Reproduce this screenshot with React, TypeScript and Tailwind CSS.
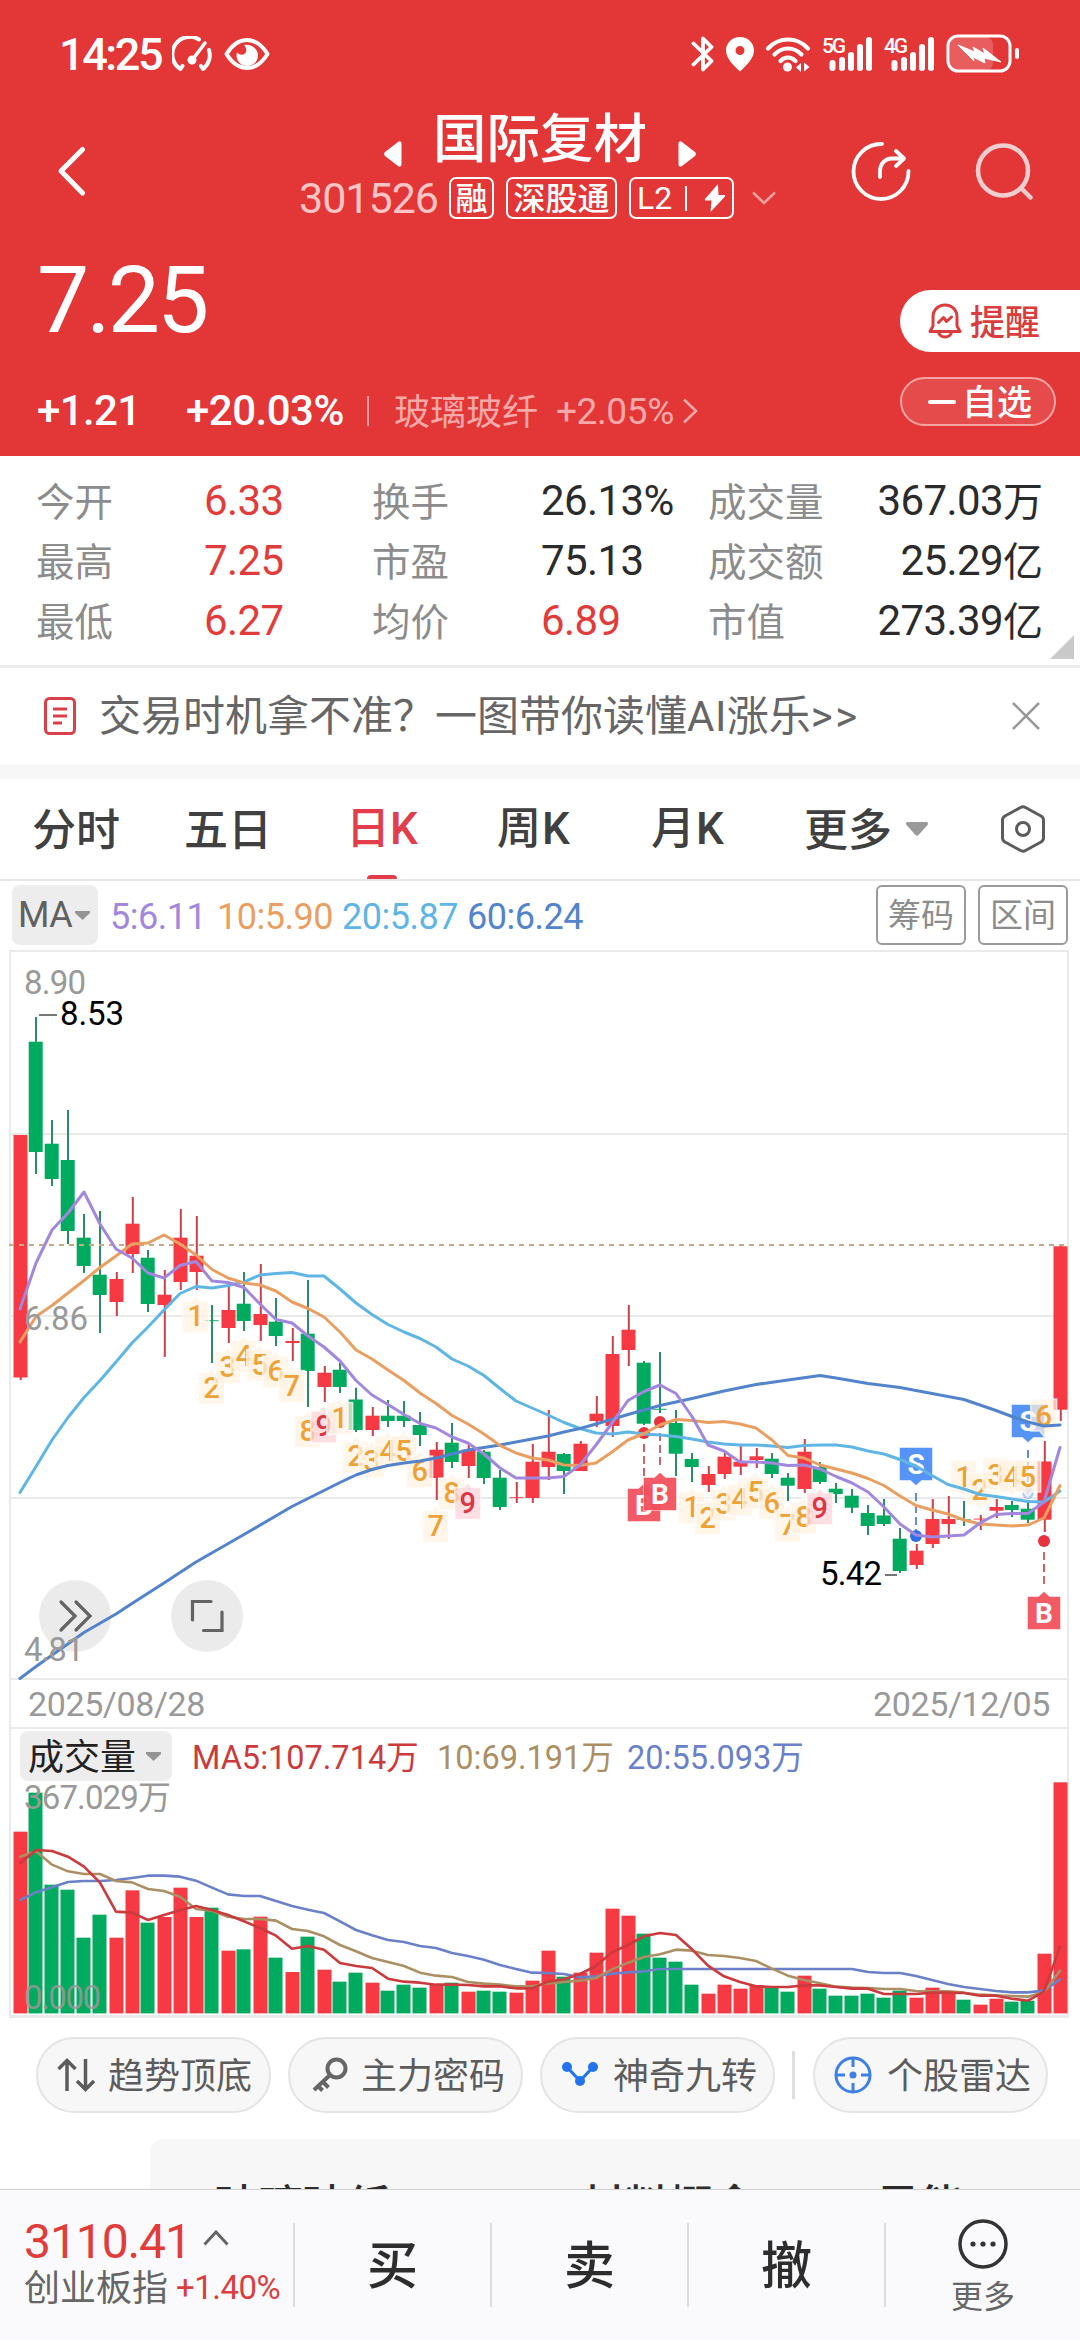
import React from "react";

type Candle = ["R" | "G", number, number, number, number];

const CANDLES: Candle[] = [
  ["R", 1135, 1135, 1377.5, 1380], ["G", 1017, 1041.7, 1152, 1174], ["G", 1120, 1143.7, 1179, 1186], ["G", 1110, 1160, 1231, 1244],
  ["G", 1214, 1237.7, 1266, 1273], ["G", 1211, 1274.7, 1295, 1333], ["R", 1272, 1279, 1302, 1316], ["R", 1197, 1223.7, 1254, 1273],
  ["G", 1250, 1257.7, 1304, 1312], ["R", 1270, 1294.7, 1305, 1357], ["R", 1209, 1237.7, 1282, 1290], ["R", 1216, 1255.7, 1272, 1290],
  ["G", 1305, 1320, 1321.2, 1363], ["R", 1286, 1310, 1328, 1343], ["G", 1272, 1303.7, 1321, 1331], ["R", 1264, 1314, 1325, 1341],
  ["G", 1298, 1321.7, 1336, 1346], ["R", 1328, 1341, 1343, 1361], ["G", 1280, 1333.7, 1371, 1407], ["R", 1366, 1372.7, 1387, 1402],
  ["G", 1363, 1369.7, 1387, 1393], ["G", 1387.7, 1399.5, 1430, 1432], ["R", 1407, 1415.7, 1430, 1436], ["G", 1400, 1415.7, 1421, 1427],
  ["G", 1401, 1415.7, 1421, 1427], ["G", 1412, 1425, 1435, 1446], ["R", 1442, 1449.7, 1478, 1500], ["G", 1423, 1442.7, 1462, 1468],
  ["R", 1443, 1449.7, 1466, 1478], ["G", 1450, 1451.7, 1478, 1484], ["G", 1470, 1477.7, 1507, 1510], ["R", 1482, 1497, 1498.2, 1503],
  ["R", 1444, 1461.7, 1498, 1503], ["R", 1410, 1451.7, 1467, 1480], ["G", 1453, 1454, 1471, 1494], ["R", 1441, 1443.7, 1471, 1471],
  ["R", 1396, 1413.7, 1421, 1427], ["R", 1336, 1354, 1426, 1437], ["R", 1305, 1329.7, 1350, 1366], ["G", 1361, 1362.7, 1423.7, 1425],
  ["G", 1352, 1408.7, 1410, 1413], ["G", 1410, 1423, 1453.7, 1476], ["G", 1453, 1459, 1467, 1482], ["R", 1466, 1474, 1485, 1492],
  ["R", 1453, 1456.7, 1474, 1479], ["R", 1446, 1461.7, 1466.7, 1475], ["R", 1448, 1456.3, 1460, 1468], ["G", 1453, 1458.7, 1474, 1478],
  ["G", 1473, 1477.7, 1485.7, 1501], ["R", 1439, 1451.7, 1489, 1493], ["G", 1462, 1467, 1482, 1484], ["G", 1483, 1488.7, 1494, 1503],
  ["G", 1489, 1495.7, 1507.7, 1513], ["G", 1505, 1513, 1526, 1535], ["G", 1499, 1515.5, 1524, 1526], ["G", 1528, 1538.7, 1571, 1573],
  ["R", 1544, 1550.7, 1565, 1569], ["R", 1499, 1519, 1544, 1548], ["R", 1496, 1519, 1524, 1539], ["G", 1501, 1519, 1520, 1526],
  ["R", 1515, 1518.5, 1519.7, 1530], ["R", 1499, 1507, 1510.7, 1518], ["G", 1501, 1505, 1510, 1517], ["G", 1500, 1508.7, 1519.7, 1523],
  ["R", 1441, 1461.5, 1519.7, 1532], ["R", 1246, 1246.3, 1409.7, 1421],
];

const MA5 = [1309, 1263, 1230, 1213, 1192, 1224, 1249, 1258, 1273, 1278, 1265.5, 1261.5, 1281, 1282.5, 1287.5, 1304, 1319.5, 1323, 1336, 1347, 1361, 1380.5, 1395, 1404.5, 1414.5, 1423.5, 1428, 1437, 1443, 1454, 1468, 1478, 1478, 1478, 1476.5, 1465, 1445, 1423, 1400.5, 1391.5, 1385, 1393.5, 1416.5, 1445, 1451, 1462, 1462, 1463, 1465.5, 1465, 1469, 1476.5, 1483, 1492, 1507, 1524, 1535, 1537, 1536, 1535, 1523, 1514.5, 1513.5, 1513.5, 1502, 1447.5];
const MA10 = [1342, 1316.5, 1305.5, 1293, 1280.5, 1267.5, 1256, 1244, 1243, 1235, 1244, 1255, 1269.5, 1278, 1283, 1285, 1291, 1302, 1308.5, 1317, 1332, 1350, 1359, 1370, 1380.5, 1393, 1403.5, 1415.5, 1424, 1434, 1445.5, 1453, 1458, 1460, 1465, 1465.5, 1463, 1452, 1440, 1433.5, 1425, 1419.5, 1420.5, 1422.5, 1421.5, 1424, 1428, 1440, 1455.5, 1458, 1465, 1469, 1473, 1478.5, 1485.5, 1496, 1505.5, 1510, 1514, 1520, 1524, 1525, 1526, 1525, 1518, 1485.5];
const MA20 = [1492.5, 1466.5, 1440, 1417.5, 1397.5, 1380.5, 1362, 1343, 1327, 1310, 1293.5, 1286.5, 1288, 1285.5, 1282, 1275, 1273.5, 1272.5, 1276, 1276, 1289, 1303, 1314.5, 1324.5, 1332, 1338.5, 1347, 1359, 1366, 1375.5, 1388.5, 1401, 1408, 1415, 1422.5, 1428.5, 1433, 1434, 1432, 1434, 1435, 1436.5, 1439, 1442, 1444, 1445, 1445, 1446, 1447.5, 1445.5, 1445, 1445, 1447, 1451, 1454, 1459.5, 1466, 1475.5, 1484.5, 1489, 1494.5, 1496.5, 1499, 1501.5, 1502, 1491];
const MA60: [number, number][] = [[0, 1678.5], [1, 1666.5], [4, 1632.5], [6, 1614], [7, 1603.5], [9, 1583], [11, 1562], [14, 1534.5], [17, 1506.5], [20, 1482.5], [21, 1475], [22, 1469.5], [23, 1465.5], [24, 1463], [25, 1461], [26, 1458], [27, 1454], [28, 1450], [29, 1447.5], [30, 1445], [31, 1442], [32, 1439], [33, 1436], [34, 1432], [35, 1428.5], [36, 1424], [38, 1414.5], [40, 1405.5], [42, 1398.5], [44, 1391], [46, 1384.5], [48, 1380], [50, 1375.5], [51, 1378], [53, 1383.5], [55, 1387.5], [57, 1393.5], [59, 1399.5], [61, 1410.5], [62, 1416.5], [63, 1422], [64, 1426], [65, 1425]];

/* Volume values are measured downwards in thirds of a pixel from the top of the pane. */
const VOL = [395, 278, 554, 569, 713, 644, 713, 571, 668, 651, 563, 651, 623, 752, 748, 650, 773, 816, 710, 809, 845, 818, 848, 872, 854, 863, 854, 848, 875, 872, 875, 878, 842, 752, 830, 818, 758, 626, 647, 701, 773, 785, 854, 881, 854, 866, 855, 863, 875, 827, 866, 887, 887, 881, 893, 872, 893, 863, 881, 899, 914, 896, 905, 902, 761, 247];
const VMA5 = [490, 450, 453, 470, 500, 548, 635, 638, 660, 645, 631, 618, 630, 645, 664, 684, 707, 746, 738, 749, 789, 798, 804, 836, 845, 848, 854, 854, 855, 859, 859, 865, 865, 845, 838, 822, 798, 757, 735, 709, 699, 705, 748, 797, 829, 846, 859, 861, 861, 856, 856, 861, 866, 866, 882, 882, 882, 878, 878, 879, 887, 887, 896, 902, 875, 740];
const VMA10 = [470, 454, 494, 514, 522, 522, 543, 547, 567, 573, 590, 627, 632, 650, 657, 657, 662, 687, 693, 709, 735, 754, 774, 786, 798, 818, 827, 831, 846, 851, 854, 859, 859, 850, 846, 842, 834, 808, 788, 771, 763, 749, 752, 765, 768, 774, 783, 806, 827, 840, 850, 860, 863, 864, 867, 867, 873, 874, 874, 878, 884, 886, 888, 890, 876, 812];
const VMA20 = [600, 577, 562, 546, 543, 543, 540, 534, 527, 527, 530, 542, 563, 583, 588, 588, 603, 618, 629, 639, 664, 690, 706, 720, 726, 738, 744, 759, 768, 779, 795, 807, 818, 819, 822, 832, 829, 821, 817, 814, 807, 807, 807, 807, 807, 807, 807, 807, 807, 807, 807, 807, 807, 816, 819, 819, 828, 840, 852, 861, 867, 873, 877, 877, 872, 838];

type Chip = [number, string, number, boolean?];
const CHIPS: Chip[] = [
  [11, "1", 1316], [12, "2", 1387.5], [13, "3", 1367], [14, "4", 1355.5], [15, "5", 1364.5], [16, "6", 1371], [17, "7", 1385.5],
  [18, "8", 1431], [19, "9", 1426], [20, "1", 1417.5], [21, "2", 1456], [22, "3", 1461], [23, "4", 1451], [24, "5", 1451], [25, "6", 1471],
  [26, "7", 1525.5], [27, "8", 1493], [28, "9", 1502.5],
  [42, "1", 1507], [43, "2", 1518], [44, "3", 1504], [45, "4", 1499], [46, "5", 1492], [47, "6", 1502.5], [48, "7", 1525], [49, "8", 1517], [50, "9", 1508],
  [59, "1", 1477, true], [60, "2", 1490, true], [61, "3", 1474.5, true], [62, "4", 1477, true], [63, "5", 1477, true], [64, "6", 1416, true],
];

const cx = (i: number) => 20.5 + 16 * i;
const line = (v: number[]) => v.map((y, i) => `${cx(i) - 0.5},${y}`).join(" ");
const vline = (v: number[]) => v.map((y, i) => `${cx(i) - 0.5},${1700 + y / 3}`).join(" ");

const NUM = "[font-family:Roboto,'Noto_Sans_CJK_SC',sans-serif]";
const CJK = "pb-[0.11em] [font-family:'Noto_Sans_CJK_SC',sans-serif]";

function NumberChip({ chip }: { chip: Chip }) {
  const [i, t, y, above] = chip;
  const x = cx(i) - 0.8;
  const nine = t === "9";
  const d = above
    ? `M${x - 13} ${y - 17}h26v32h-9l-4 5l-4-5h-9z`
    : `M${x - 13} ${y - 15}h9l4-5l4 5h9v32h-26z`;
  return (
    <g>
      <path d={d} fill={nine ? "#ffd3d8" : "#fff1e0"} fillOpacity={0.72} stroke="#fff" strokeOpacity={0.7} strokeWidth={1.5} />
      <text x={x} y={y + 10} textAnchor="middle" fontSize={29} fontWeight={500} fill={nine ? "#dc3644" : "#eea235"} className={NUM}>{t}</text>
    </g>
  );
}

function TradeMark({ i, kind, top, dot, from, to, dim }: { i: number; kind: "B" | "S"; top: number; dot: number; from: number; to: number; dim?: boolean }) {
  const x = cx(i) - 0.5;
  const buy = kind === "B";
  const box = buy ? `M${x - 16.5} ${top}h11l5.500-5l5.500 5h11v33h-33z` : `M${x - 16.500} ${top}h33v33h-11l-5.500 5l-5.500-5h-11z`;
  return (
    <g>
      <circle cx={x} cy={dot} r={6} fill={buy ? "#e6333e" : "#2c6fe8"} fillOpacity={dim ? 0.35 : 1} />
      <line x1={x} x2={x} y1={from} y2={to} stroke={buy ? "#c9555d" : "#5483c8"} strokeWidth={1.8} strokeDasharray="8 4" />
      <path d={box} fill={buy ? "#f1505b" : "#4a8cf6"} fillOpacity={0.94} stroke="#fff" strokeOpacity={0.5} strokeWidth={1} />
      <text x={x} y={top + 26} textAnchor="middle" fontSize={28} fontWeight={700} fill="#fff" className={NUM}>{kind}</text>
    </g>
  );
}

function PriceChart() {
  return (
    <svg className="block overflow-visible" width={1056} height={728} viewBox="11 952 1056 728">
      <g stroke="#eaeaea" strokeWidth={2}>
        {[1134, 1316, 1498, 1679].map((y) => <line key={y} x1={11} x2={1067} y1={y} y2={y} />)}
      </g>
      <circle cx={75} cy={1616} r={36} fill="#ebebeb" />
      <circle cx={207} cy={1616} r={36} fill="#ebebeb" />
      {CANDLES.map(([c, h, t, b, l], i) => {
        const x = c === "R" ? cx(i) : cx(i) - 0.8;
        const doji = b - t < 1.6;
        const fill = c === "R" ? "#f63942" : "#00aa5e";
        const wick = c === "R" ? "#c9414b" : "#2b8d62";
        return (
          <g key={i}>
            <rect x={x - 0.7} y={h} width={2} height={l - h} fill={wick} />
            <rect x={x - 7} y={t} width={14} height={b - t} fill={fill} fillOpacity={doji ? 0.75 : 1} />
          </g>
        );
      })}
      <TradeMark i={39} kind="B" top={1488.5} dot={1433} from={1444} to={1478} />
      <TradeMark i={40} kind="B" top={1477.5} dot={1422} from={1433} to={1469} />
      <TradeMark i={64} kind="B" top={1596.5} dot={1541} from={1552} to={1588} />
      <TradeMark i={56} kind="S" top={1447.5} dot={1536} from={1493} to={1530} />
      <TradeMark i={63} kind="S" top={1404.5} dot={1493} from={1450} to={1485} dim />
      {CHIPS.map((c) => <NumberChip key={`${c[0]}-${c[1]}`} chip={c} />)}
      <line x1={9} x2={1069} y1={1245} y2={1245} stroke="#c5ab84" strokeWidth={2} strokeDasharray="5 5" />
      <g fill="none" strokeWidth={3} strokeLinejoin="round" strokeLinecap="round">
        <polyline points={line(MA20)} stroke="#5fb6e4" />
        <polyline points={MA60.map(([i, y]) => `${cx(i) - 0.5},${y}`).join(" ")} stroke="#5384cb" />
        <polyline points={line(MA10)} stroke="#ea9f62" />
        <polyline points={line(MA5)} stroke="#a288dc" />
      </g>
      <g stroke="#636363" strokeWidth={3.200} fill="none" strokeLinecap="round">
        <path d="M61 1602l14 14l-14 14M76 1602l14 14l-14 14" />
        <path d="M192.500 1620v-18.500h18.500M203.500 1630.500h18.500v-18.500" />
      </g>
      <g className={NUM} fontSize={33} fill="#999">
        <text x={24} y={994} textLength={62}>8.90</text>
        <text x={24} y={1330} textLength={64}>6.86</text>
        <text x={24} y={1661} textLength={60}>4.81</text>
        <g fill="#000">
          <text x={60} y={1025} textLength={64}>8.53</text>
          <text x={820} y={1585} textLength={62}>5.42</text>
        </g>
      </g>
      <path d="M39 1015h18M885 1575h12" stroke="#777" strokeWidth={2} />
    </svg>
  );
}

function VolumeChart() {
  return (
    <svg className="block overflow-visible" width={1056} height={232} viewBox="11 1783 1056 232">
      {VOL.map((v, i) => {
        const red = CANDLES[i][0] === "R";
        const top = 1700 + v / 3;
        return <rect key={i} x={(red ? cx(i) : cx(i) - 1) - 7} y={top} width={14} height={2013.4 - top} fill={red ? "#f63942" : "#00aa5e"} />;
      })}
      <g fill="none" strokeWidth={2.600} strokeLinejoin="round" strokeLinecap="round">
        <polyline points={vline(VMA20)} stroke="#6a80c8" />
        <polyline points={vline(VMA10)} stroke="#ab8f62" />
        <polyline points={vline(VMA5)} stroke="#cb3a3c" />
      </g>
      <g className={NUM} fontSize={33} fill="#999">
        <text x={24} y={1809} textLength={147}>367.029万</text>
        <text x={24} y={2009} textLength={77} fillOpacity={0.85}>0.000</text>
      </g>
    </svg>
  );
}

function Signal({ label }: { label: string }) {
  return (
    <svg className="overflow-visible" width={52} height={36} viewBox="0 0 52 36">
      <text x={0} y={17} fontSize={21} fontWeight={500} fill="#fff" textLength={24} className={NUM}>{label}</text>
      <g fill="#fff">
        <rect x={7.500} y={24} width={6} height={11} rx={3} />
        <rect x={17} y={21} width={6} height={14} rx={3} />
        <rect x={26} y={16} width={6} height={19} rx={3} />
        <rect x={35} y={8} width={6} height={27} rx={3} />
        <rect x={44} y={1} width={6} height={34} rx={3} />
      </g>
    </svg>
  );
}

function StatusBar() {
  return (
    <div className="flex h-[108px] items-center pl-[59px] pr-[60px]">
      <span className={`${NUM} w-[111px] whitespace-nowrap text-[45px] font-medium leading-none tracking-[-2.4px]`}>14:25</span>
      <svg className="ml-[2px]" width={40} height={36} viewBox="0 0 40 36" fill="none" stroke="#fff" strokeWidth={4} strokeLinecap="round">
        <path d="M8.500 33A17 17 0 1 1 27 3.500M37 14A17.500 17.500 0 0 1 31 33M8.500 33l2-3M31 33l-2-3" />
        <path d="M33 7L21 23" strokeWidth={3.500} />
        <circle cx={20} cy={24} r={2.500} fill="#fff" />
      </svg>
      <svg className="ml-[12px]" width={46} height={34} viewBox="0 0 46 34">
        <path d="M2.500 17C8 8 15 3 23 3s15 5 20.500 14C38 26 31 31 23 31S8 26 2.500 17z" fill="none" stroke="#fff" strokeWidth={4} strokeLinejoin="round" />
        <path d="M20 8c8-1 14 4 14 10.500S29 29 23 29s-10.500-5-10.500-10.500c0-1 .2-2 .6-3c1.500 2 5 3 7.400 1.500c2.500-2 2.500-6-.5-9z" fill="#fff" />
      </svg>
      <div className="ml-auto flex items-center">
        <svg width={24} height={36} viewBox="0 0 24 36" fill="none" stroke="#fff" strokeWidth={3.800} strokeLinejoin="round" strokeLinecap="round">
          <path d="M2.500 7.500L20.500 25L12 33.500V2.500L20.500 11L2.500 28.500" />
        </svg>
        <svg className="ml-[11px]" width={28} height={36} viewBox="0 0 28 36">
          <path fillRule="evenodd" fill="#fff" d="M14 1C6 1 0 7 0 14.500C0 22 7 29 14 35.500C21 29 28 22 28 14.500C28 7 22 1 14 1zM14 10a4.500 4.500 0 1 1 0 9a4.500 4.500 0 0 1 0-9z" />
        </svg>
        <svg className="ml-[11px]" width={46} height={36} viewBox="0 0 46 36" fill="none" stroke="#fff" strokeWidth={4.200} strokeLinecap="round">
          <path d="M3 12.500C14 0.500 32 0.500 43 12.500M9.500 18.500C17 10.500 29 10.500 36.500 18.500M15.500 25C20 20.500 26 20.500 30.500 25" />
          <circle cx={22.500} cy={31} r={4.500} fill="#fff" stroke="none" />
          <path d="M36 27v9l-5-4.500zM39 26.500v9l5.500-4.500z" fill="#fff" stroke="none" />
        </svg>
        <div className="ml-[11px] flex gap-[10px]"><Signal label="5G" /><Signal label="4G" /></div>
        <svg className="ml-[10px]" width={74} height={40} viewBox="0 0 74 40">
          <rect x={4} y={3} width={43} height={34} rx={8} fill="#fff" fillOpacity={0.2} />
          <rect x={2} y={2} width={62} height={35} rx={10} fill="none" stroke="#fff" strokeWidth={3} />
          <rect x={69} y={14} width={4} height={11} rx={2} fill="#fff" />
          <path d="M12 11l17 7l-2-5l12 7l-2-6l18 14l-17-4l1 5l-12-6l1 4z" fill="#fff" stroke="#fff" strokeLinejoin="round" />
        </svg>
      </div>
    </div>
  );
}

function Header() {
  const tag = `${CJK} flex h-[42px] items-center justify-center whitespace-nowrap rounded-[7px] border-2 border-white text-[32px] font-medium leading-none`;
  return (
    <header className="h-[456px] bg-[#e33637] text-white">
      <StatusBar />
      <div className="flex h-[120px]">
        <svg className="ml-[54px] mt-[36px]" width={34} height={54} viewBox="0 0 34 54" fill="none" stroke="#fff" strokeWidth={5} strokeLinecap="round" strokeLinejoin="round">
          <path d="M28.500 5.500L7 27l21.500 22" />
        </svg>
        <div className="ml-[212px] w-[478px]">
          <div className="ml-[84px] flex h-[64px] items-center">
            <svg className="mt-[28px]" width={18} height={26} viewBox="0 0 18 26"><path d="M17.500 2.500v21c0 2-2 3-3.500 1.500L1 15c-1.200-1-1.200-3 0-4L14 1c1.500-1.500 3.500-.5 3.500 1.500z" fill="#fff" /></svg>
            <h1 className={`${CJK} mb-[5px] ml-[31px] w-[216px] whitespace-nowrap text-[53.5px] font-medium leading-[54px]`}>国际复材</h1>
            <svg className="ml-[29px] mt-[28px]" width={18} height={26} viewBox="0 0 18 26"><path d="M.5 2.500v21c0 2 2 3 3.500 1.500L17 15c1.200-1 1.200-3 0-4L4 1C2.500-.5.5.5.500 2.500z" fill="#fff" /></svg>
          </div>
          <div className="mt-[5px] flex h-[42px] items-center">
            <span className={`${NUM} ml-[-1px] w-[150px] whitespace-nowrap text-[43px] leading-none tracking-[-1px] text-[#ffc4c4]`}>301526</span>
            <span className={`${tag} w-[45px]`}>融</span>
            <span className={`${tag} ml-[12px] w-[111px]`}>深股通</span>
            <span className={`${NUM} ml-[12px] flex h-[42px] w-[105px] items-center rounded-[7px] border-2 border-white pl-[6px] text-[32px] leading-none`}>
              <span className="w-[38px]">L2</span>
              <i className="ml-[10px] h-[25px] w-[2px] bg-white" />
              <svg className="ml-[17px]" width={22} height={30} viewBox="0 0 22 30"><path d="M14 1L1 16c-.5.800 0 1.500 1 1.500h5.500L6.500 29L21 13.500c.5-.8 0-1.500-1-1.500h-5.500z" fill="#fff" /></svg>
            </span>
            <svg className="ml-[18px]" width={24} height={14} viewBox="0 0 24 14" fill="none" stroke="#f3a0a0" strokeWidth={2.500}><path d="M1 1.500l11 10.500l11-10.500" /></svg>
          </div>
        </div>
        <svg className="ml-[73px] mt-[32px]" width={60} height={62} viewBox="0 0 60 62" fill="none" stroke="#fff" strokeWidth={3.800} strokeLinecap="round" strokeLinejoin="round">
          <path d="M31 4A27.500 27.500 0 1 0 57.500 31" />
          <path d="M29 37v-6c0-7 5-12.500 12-12.500h11M45 11l8 7.500l-8 7.500" />
        </svg>
        <svg className="ml-[64px] mt-[34px]" width={58} height={60} viewBox="0 0 58 60" fill="none" stroke="#f0cdcf" strokeWidth={4.500} strokeLinecap="round">
          <circle cx={28} cy={28.500} r={25} /><path d="M46.500 46.500l9 9" />
        </svg>
      </div>
      <div className="flex h-[228px]">
        <div className="flex-1 pl-[37px]">
          <div className={`${NUM} mt-[20px] h-[106px] text-[93px] font-normal leading-[106px] tracking-[-3px]`}>7.25</div>
          <div className="mt-[35px] flex h-[44px] items-center">
            <span className={`${NUM} w-[149px] text-[42px] font-medium leading-none tracking-[-0.6px]`}>+1.21</span>
            <span className={`${NUM} w-[181px] text-[42px] font-medium leading-none tracking-[-0.5px]`}>+20.03%</span>
            <i className="h-[30px] w-[2px] bg-[#f09a9a]" />
            <span className={`${CJK} ml-[25px] w-[162px] whitespace-nowrap text-[36px] leading-none text-[#f9a9a9]`}>玻璃玻纤</span>
            <span className={`${NUM} w-[126px] whitespace-nowrap text-[37px] leading-none text-[#f9a9a9] tracking-[-0.4px]`}>+2.05%</span>
            <svg width={16} height={26} viewBox="0 0 16 26" fill="none" stroke="#f9a9a9" strokeWidth={2.500}><path d="M2 1.500L14 13L2 24.500" /></svg>
          </div>
        </div>
        <div className="w-[180px]">
          <div className="mt-[62px] flex h-[62px] items-center rounded-l-[31px] bg-white text-[#da3d3e]">
            <svg className="ml-[28px]" width={34} height={36} viewBox="0 0 34 36" fill="none" stroke="currentColor" strokeWidth={3} strokeLinejoin="round" strokeLinecap="round">
              <path d="M2 28.500L5 23V14C5 7 10 2 17 2s12 5 12 12v9l3 5.500zM10.500 29c1 6.500 12 6.500 13 0M10.500 19.500l5-5l3 4l5-4.500" />
            </svg>
            <span className={`${CJK} ml-[8px] text-[35px] font-medium leading-none`}>提醒</span>
          </div>
          <div className="mt-[25px] flex h-[49px] w-[156px] items-center rounded-full border-2 border-[#f5a3a3] bg-[#e64b4c]">
            <i className="ml-[26px] h-[4px] w-[28px] rounded bg-white" />
            <span className={`${CJK} ml-[6px] text-[35px] font-medium leading-none`}>自选</span>
          </div>
        </div>
      </div>
    </header>
  );
}

const STATS: [string, string, boolean, string, string, boolean, string, string, string][] = [
  ["今开", "6.33", true, "换手", "26.13%", false, "成交量", "367.03", "万"],
  ["最高", "7.25", true, "市盈", "75.13", false, "成交额", "25.29", "亿"],
  ["最低", "6.27", true, "均价", "6.89", true, "市值", "273.39", "亿"],
];

function Stats() {
  const label = `${CJK} text-[38.5px] leading-none text-[#8c8c8c]`;
  const value = `${NUM} text-[42px] leading-none tracking-[-0.6px]`;
  return (
    <section className="relative h-[212px] border-b-[3px] border-[#ebebeb] pt-[15px]">
      {STATS.map((r) => (
        <div key={r[0]} className="flex h-[60px] items-center pl-[36px] pr-[37px]">
          <span className={`${label} w-[168px]`}>{r[0]}</span>
          <span className={`${value} w-[168px] text-[#e23c3a]`}>{r[1]}</span>
          <span className={`${label} w-[169px]`}>{r[3]}</span>
          <span className={`${value} w-[167px] ${r[5] ? "text-[#e23c3a]" : "text-[#2b2b2b]"}`}>{r[4]}</span>
          <span className={`${label}`}>{r[6]}</span>
          <span className="ml-auto flex items-center text-[#2b2b2b]">
            <span className={`${value}`}>{r[7]}</span>
            <span className={`${CJK} text-[40px] leading-none`}>{r[8]}</span>
          </span>
        </div>
      ))}
      <svg className="absolute bottom-[6px] right-[6px]" width={24} height={24} viewBox="0 0 24 24"><path d="M24 0v24H0z" fill="#c9c9c9" /></svg>
    </section>
  );
}

function Notice() {
  return (
    <section className="box-border flex h-[111px] items-center border-b-[15px] border-[#f7f7f7]">
      <svg className="ml-[44px]" width={32} height={38} viewBox="0 0 32 38" fill="none" stroke="#d8404a" strokeWidth={3}>
        <rect x={1.500} y={1.500} width={29} height={35} rx={4} /><path d="M9 12h14M9 19h14M9 26h9" />
      </svg>
      <p className="ml-[23px] whitespace-nowrap pb-[2px] text-[42px] leading-none text-[#666] [font-family:'Noto_Sans_CJK_SC',sans-serif]">交易时机拿不准？一图带你读懂<span className="tracking-[0.5px] [font-family:Roboto]">AI</span>涨乐<span className="tracking-[2.5px] [font-family:Roboto]">&gt;&gt;</span></p>
      <svg className="ml-auto mr-[40px]" width={28} height={28} viewBox="0 0 28 28" stroke="#999" strokeWidth={2.500}><path d="M1 1l26 26M27 1L1 27" /></svg>
    </section>
  );
}

function Tabs() {
  const cell = `${CJK} whitespace-nowrap text-[44px] leading-none text-[#404040] font-medium`;
  return (
    <nav className="relative flex h-[102px] items-center border-b-[2px] border-[#e6e6e6] pl-[32px]">
      <span className={`${cell} w-[152px]`}>分时</span>
      <span className={`${cell} w-[162px]`}>五日</span>
      <span className="relative flex h-full w-[151px] items-center">
        <span className="whitespace-nowrap pb-[5px] text-[44px] font-medium leading-none text-[#e13d4a] [font-family:'Noto_Sans_CJK_SC',sans-serif]">日<span className="[font-family:Roboto]">K</span></span>
        <i className="absolute bottom-0 left-[21px] h-[4px] w-[30px] rounded-t bg-[#e13d4a]" />
      </span>
      <span className={`${cell} w-[154px]`}>周<span className="ml-[1px] [font-family:Roboto]">K</span></span>
      <span className={`${cell} w-[153px]`}>月<span className="ml-[1px] [font-family:Roboto]">K</span></span>
      <span className={`${cell} w-[102px]`}>更多</span>
      <svg width={22} height={14} viewBox="0 0 22 14"><path d="M2 0h18c2 0 2.500 1.500 1.500 3L12.500 13c-1 1-2 1-3 0L.5 3C-.5 1.500 0 0 2 0z" fill="#999" /></svg>
      <svg className="ml-[73px]" width={44} height={48} viewBox="0 0 44 48" fill="none" stroke="#5c5c5c" strokeWidth={3} strokeLinejoin="round">
        <path d="M19.500 2.500Q22 1.200 24.500 2.500L40 11Q42.500 12.500 42.500 15V33Q42.500 35.500 40 37L24.500 45.500Q22 46.800 19.500 45.500L4 37Q1.500 35.500 1.500 33V15Q1.500 12.500 4 11z" />
        <circle cx={22} cy={24} r={6.500} />
      </svg>
    </nav>
  );
}

const Down = ({ w }: { w: number }) => (
  <svg width={w} height={9} viewBox="0 0 15 9"><path d="M0 0h15v2L7.500 9L0 2z" fill="#949494" /></svg>
);

function Indicators() {
  const v = `${NUM} whitespace-nowrap text-[36px] leading-none tracking-[-0.5px]`;
  const btn = `${CJK} flex h-[60px] w-[90px] items-center justify-center rounded-[6px] border-2 border-[#9a9a9a] text-[33px] leading-none text-[#8c8c8c]`;
  return (
    <div className="flex h-[69px] items-start pl-[12px] pr-[12px] pt-[4px]">
      <div className="flex h-[60px] w-[86px] items-center rounded-[8px] bg-[#ededed] pl-[6px]">
        <span className={`${NUM} w-[57px] text-[36px] leading-none tracking-[-0.5px] text-[#606060]`}>MA</span>
        <Down w={15} />
      </div>
      <div className="flex h-[64px] items-center">
        <span className={`${v} ml-[12px] w-[107px] text-[#a288dc]`}>5:6.11</span>
        <span className={`${v} w-[125px] text-[#ea9f62]`}>10:5.90</span>
        <span className={`${v} w-[125px] text-[#5fb6e4]`}>20:5.87</span>
        <span className={`${v} w-[125px] text-[#5384cb]`}>60:6.24</span>
      </div>
      <div className="ml-auto flex gap-[12px]"><span className={btn}>筹码</span><span className={btn}>区间</span></div>
    </div>
  );
}

function Charts() {
  const v = `${NUM} whitespace-nowrap pt-[5px] text-[32.5px] leading-none`;
  return (
    <section className="ml-[9px] w-[1060px] border-x-2 border-b-[3px] border-[#eaeaea]">
      <div className="h-[730px] border-t-2 border-[#eaeaea]"><PriceChart /></div>
      <div className={`${NUM} flex h-[49px] items-center justify-between border-b-2 border-[#eaeaea] pl-[17px] pr-[17px] text-[34px] leading-none tracking-[-0.4px] text-[#999]`}>
        <span>2025/08/28</span><span>2025/12/05</span>
      </div>
      <div className="flex h-[54px] items-center pl-[9px]">
        <div className="flex h-[50px] w-[152px] items-center rounded-[8px] bg-[#ededed] pl-[8px]">
          <span className={`${CJK} w-[118px] text-[36px] leading-none text-[#222]`}>成交量</span>
          <Down w={15} />
        </div>
        <span className={`${v} ml-[20px] w-[245px] text-[#cb3a3c]`}>MA5:107.714万</span>
        <span className={`${v} w-[190px] text-[#ab8f62]`}>10:69.191万</span>
        <span className={`${v} text-[#6a80c8]`}>20:55.093万</span>
      </div>
      <VolumeChart />
    </section>
  );
}

function Tools() {
  const pill = "flex h-[76px] w-[235px] items-center rounded-full border-2 border-[#e4e4e4] bg-[#f7f7f7] pl-[18px]";
  const t = `${CJK} whitespace-nowrap text-[36px] leading-none text-[#5c5c5c]`;
  return (
    <div className="mt-[19px] flex h-[76px] items-center pl-[36px]">
      <div className={pill}>
        <svg width={40} height={36} viewBox="0 0 40 36" fill="none" stroke="#5c5c5c" strokeWidth={3.500}><path d="M11 34V4M2.500 12L11 3.500l8.500 8.500M29.500 2v30M21 24l8.500 8.500l8.500-8.500" /></svg>
        <span className={`${t} ml-[12px]`}>趋势顶底</span>
      </div>
      <div className={`${pill} ml-[17px]`}>
        <svg className="ml-[4px]" width={36} height={36} viewBox="0 0 36 36" fill="none" stroke="#666" strokeWidth={4}><circle cx={24.500} cy={11.500} r={9} /><path d="M18 18L2 33M11 25l5.500 5.500M6 29l4.500 4.500" /></svg>
        <span className={`${t} ml-[13px]`}>主力密码</span>
      </div>
      <div className={`${pill} ml-[17px]`}>
        <svg className="ml-[1px]" width={38} height={36} viewBox="0 0 38 36"><path d="M6 10L19 24L32 10" fill="none" stroke="#2372f0" strokeWidth={3} /><g fill="#2372f0"><circle cx={6} cy={10} r={5} /><circle cx={19} cy={24} r={5} /><circle cx={32} cy={10} r={5} /></g></svg>
        <span className={`${t} ml-[14px]`}>神奇九转</span>
      </div>
      <i className="ml-[17px] h-[48px] w-[3px] bg-[#dedede]" />
      <div className={`${pill} ml-[18px]`}>
        <svg className="ml-[1px]" width={38} height={38} viewBox="0 0 38 38" fill="none" stroke="#3f7fe6" strokeWidth={3}><circle cx={19} cy={19} r={17} /><path d="M19 2v9M19 27v9M2 19h9M27 19h9" /><circle cx={19} cy={19} r={3.500} fill="#3f7fe6" stroke="none" /></svg>
        <span className={`${t} ml-[15px]`}>个股雷达</span>
      </div>
    </div>
  );
}

function BottomBar() {
  const act = `${CJK} flex h-[84px] w-[197px] items-center justify-center border-r-2 border-[#dcdce0] text-[51px] font-medium leading-none text-[#2d2d2d]`;
  return (
    <footer className="flex h-[151px] shrink-0 items-start border-t border-[#cfcfcf] bg-[#fafafc] pt-[33px]">
      <div className="h-[84px] w-[295px] border-r-2 border-[#dcdce0] pl-[24px]">
        <div className="flex h-[38px] items-center">
          <span className={`${NUM} w-[179px] text-[48px] leading-none tracking-[-1.1px] text-[#e23c3a]`}>3110.41</span>
          <svg className="mt-[-8px]" width={26} height={16} viewBox="0 0 26 16" fill="none" stroke="#666" strokeWidth={3}><path d="M1.500 14.500L13 2l11.500 12.500" /></svg>
        </div>
        <div className="mt-[5px] flex h-[42px] items-center">
          <span className={`${CJK} w-[152px] whitespace-nowrap text-[36px] leading-none text-[#666]`}>创业板指</span>
          <span className={`${NUM} whitespace-nowrap text-[33px] leading-none tracking-[-0.5px] text-[#d8403f]`}>+1.40%</span>
        </div>
      </div>
      <div className={act}>买</div>
      <div className={act}>卖</div>
      <div className={act}>撤</div>
      <div className="mt-[-4px] flex flex-1 flex-col items-center">
        <svg width={50} height={50} viewBox="0 0 50 50"><circle cx={25} cy={25} r={23} fill="none" stroke="#333" strokeWidth={3.500} /><g fill="#333"><circle cx={15} cy={25} r={2.600} /><circle cx={25} cy={25} r={2.600} /><circle cx={35} cy={25} r={2.600} /></g></svg>
        <span className={`${CJK} mt-[9px] text-[32px] leading-none text-[#666]`}>更多</span>
      </div>
    </footer>
  );
}

export default function App() {
  const s = `${CJK} whitespace-nowrap text-[44px] font-medium leading-none text-[#2d2d2d]`;
  return (
    <div className="flex h-[2340px] w-[1080px] flex-col overflow-hidden bg-white">
      <Header />
      <Stats />
      <Notice />
      <Tabs />
      <Indicators />
      <Charts />
      <Tools />
      <div className="ml-[150px] mt-[26px] flex min-h-0 flex-1 items-start overflow-hidden rounded-tl-[14px] bg-[#f7f7f7] pl-[65px] pt-[42px]">
        <span className={`${s} w-[366px]`}>玻璃玻纤</span>
        <span className={`${s} w-[295px]`}>材料概念</span>
        <span className={s}>风能</span>
      </div>
      <BottomBar />
    </div>
  );
}
